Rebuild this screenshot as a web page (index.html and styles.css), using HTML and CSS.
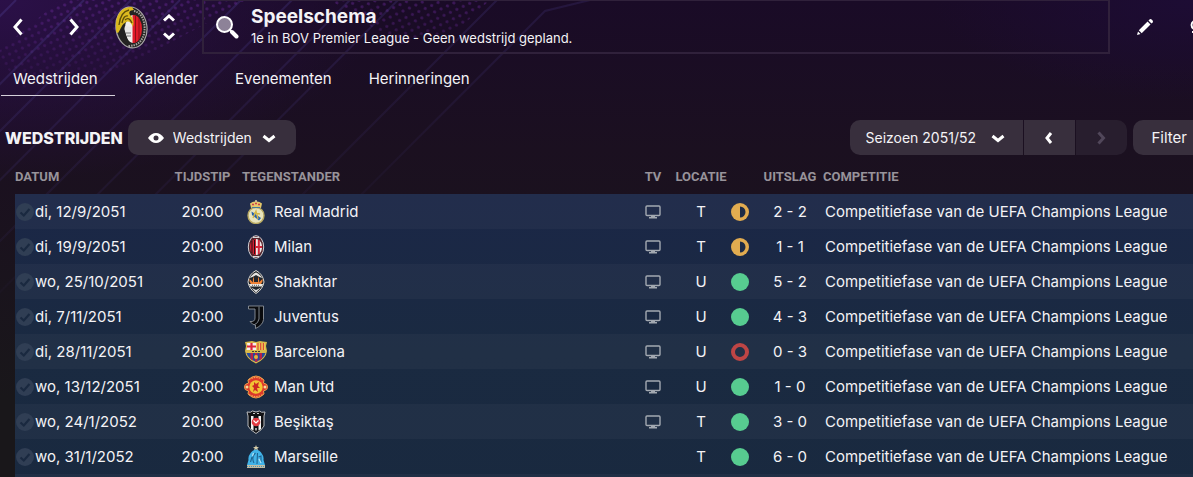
FILE: index.html
```html
<!DOCTYPE html>
<html lang="nl">
<head>
    <meta charset="UTF-8">
    <meta name="viewport" content="width=device-width, initial-scale=1.0">
    <title>Speelschema</title>
    <link rel="stylesheet" href="styles.css">
</head>
<body>

    <!-- Achtergrondpatroon -->
    <svg class="backdrop" width="620" height="330" aria-hidden="true">
        <defs>
            <pattern id="dots" width="10" height="10" patternUnits="userSpaceOnUse" patternTransform="rotate(20)">
                <circle cx="2.500" cy="2.500" r="1.600" fill="#6a2a9a"/>
                <circle cx="7.500" cy="7.500" r="1.600" fill="#6a2a9a"/>
            </pattern>
            <linearGradient id="dotFade" x1="0" y1="0" x2="0.1" y2="1">
                <stop offset="0" stop-color="#fff" stop-opacity=".5"/>
                <stop offset="1" stop-color="#fff" stop-opacity="0"/>
            </linearGradient>
            <linearGradient id="lineFade" gradientUnits="userSpaceOnUse" x1="100" y1="0" x2="160" y2="300">
                <stop offset="0" stop-color="#4a3a8c" stop-opacity=".38"/>
                <stop offset=".35" stop-color="#3d2f70" stop-opacity=".3"/>
                <stop offset="1" stop-color="#3d3070" stop-opacity="0"/>
            </linearGradient>
            <mask id="dotMask"><rect width="620" height="110" fill="url(#dotFade)"/></mask>
        </defs>
        <g mask="url(#dotMask)">
            <path d="M60 0H150L25 90L0 60V50Z M150 0H250L110 75L30 80Z M330 0H490L460 28L400 45Z" fill="url(#dots)"/>
        </g>
        <g fill="none" stroke="url(#lineFade)" stroke-width="2">
            <path d="M16 0L-1 17"/>
            <path d="M84 0L-1 85"/>
            <path d="M131 0L-1 132"/>
            <path d="M180 0L-1 181"/>
            <path d="M241 0L-1 242"/>
            <path d="M292 0L-1 293"/>
            <path d="M350 0L20 330"/>
            <path d="M398 0L68 330"/>
            <path d="M497 0L167 330"/>
            <path d="M590 0L545 11L226 330"/>
        </g>
    </svg>

    <!-- Header -->
    <header class="topbar">
        <div class="history">
            <button class="icon-btn" aria-label="Vorige"><svg width="12" height="18" viewBox="0 0 12 18"><path d="M9.500 1.500L3 9L9.500 16.500" class="arrow"/></svg></button>
            <button class="icon-btn" aria-label="Volgende"><svg width="12" height="18" viewBox="0 0 12 18"><path d="M2.500 1.500L9 9L2.500 16.500" class="arrow"/></svg></button>
        </div>
        <svg class="club" width="34" height="44" viewBox="0 0 34 44" aria-hidden="true">
            <defs><clipPath id="shield"><ellipse cx="19.500" cy="24" rx="8.500" ry="14"/></clipPath></defs>
            <ellipse cx="17.500" cy="22.500" rx="15.500" ry="20.500" fill="#242322" stroke="#a9a7a5" stroke-width="1.200" transform="rotate(-8 17 23)"/>
            <path d="M20 6C29 8 32 19 30 29C28 36 24 41 14 41" fill="none" stroke="#a5a29f" stroke-width="2" stroke-dasharray="1.500 1"/>
            <g clip-path="url(#shield)">
                <path d="M8 8H19V40H8Z" fill="#f1efed"/>
                <path d="M18.500 8H30V40H18.500Z" fill="#e01a28"/>
                <path d="M21.500 8V40M25 8V40" stroke="#8d1017" stroke-width="1"/>
            </g>
            <path d="M2 22C1 10 8 1 18 2L20 5C15 5 14 8 17 11C20 14 20 18 19 22C17 17 14 15 11 18C8 19 7 24 4 28C2 28 2 25 2 22Z" fill="#dbb91f"/>
            <path d="M5 20C6 11 10 6 15 5M8 18C9 13 11 10 14 11M11 15C14 12 16 14 18 18" fill="none" stroke="#5d4c0a" stroke-width="1.300"/>
            <path d="M11 21L18 22L17 31L13 31L10 25Z" fill="#e9e8e6"/>
            <path d="M12 28h5M13 31h4" stroke="#777" stroke-width="1"/>
            <path d="M5 28L10 23L13 33L15 38L9 36Z" fill="#242322"/>
        </svg>
        <div class="stepper">
            <button class="icon-btn" aria-label="Omhoog"><svg width="14" height="8" viewBox="0 0 14 8"><path d="M2 6.500L7 2L12 6.500" class="arrow"/></svg></button>
            <button class="icon-btn" aria-label="Omlaag"><svg width="14" height="8" viewBox="0 0 14 8"><path d="M2 1.500L7 6L12 1.500" class="arrow"/></svg></button>
        </div>
        <div class="title-box">
            <button class="icon-btn" aria-label="Zoeken">
                <svg width="24" height="24" viewBox="0 0 24 24"><circle cx="9.500" cy="9.500" r="7.500" fill="#8d8298" stroke="#fff" stroke-width="2"/><path d="M15 15L17 17" stroke="#fff" stroke-width="2"/><path d="M17 17L21.500 21.500" stroke="#fff" stroke-width="4" stroke-linecap="round"/></svg>
            </button>
            <div>
                <h1>Speelschema</h1>
                <p>1e in BOV Premier League - Geen wedstrijd gepland.</p>
            </div>
        </div>
        <div class="tools">
            <button class="icon-btn" aria-label="Bewerken">
                <svg width="18" height="18" viewBox="0 0 18 18" fill="#fff"><path d="M1 17L2 13.500L4.500 16Z"/><path d="M2.800 12.300L11.600 3.500L14.500 6.400L5.700 15.200Z"/><path d="M12.500 2.600L13.800 1.300Q14.700 .6 15.600 1.400L16.600 2.400Q17.400 3.300 16.700 4.200L15.400 5.500Z"/></svg>
            </button>
            <button class="icon-btn" aria-label="Help">
                <svg width="3" height="16" viewBox="0 0 3 16"><path d="M4 2A4.500 4.500 0 0 0 4 10M2 13H4" fill="none" stroke="#fff" stroke-width="2"/></svg>
            </button>
        </div>
    </header>

    <!-- Navigatie -->
    <nav class="tabs">
        <a href="#wedstrijden" class="active">Wedstrijden</a>
        <a href="#kalender">Kalender</a>
        <a href="#evenementen">Evenementen</a>
        <a href="#herinneringen">Herinneringen</a>
    </nav>

    <!-- Filters -->
    <div class="toolbar">
        <h2>Wedstrijden</h2>
        <label class="dropdown view">
            <svg width="16" height="12" viewBox="0 0 16 12"><path d="M0 6Q3.500 1 8 1Q12.500 1 16 6Q12.500 11 8 11Q3.500 11 0 6Z" fill="#fff"/><circle cx="8" cy="6" r="2.500" fill="#382f3d"/></svg>
            <select aria-label="Weergave"><option>Wedstrijden</option></select>
            <svg width="14" height="10" viewBox="0 0 14 10"><path d="M1.500 3L7 7.500L12.500 3" class="arrow"/></svg>
        </label>
        <div class="season">
            <label class="dropdown">
                <select aria-label="Seizoen"><option>Seizoen 2051/52</option></select>
                <svg width="14" height="10" viewBox="0 0 14 10"><path d="M1.500 3L7 7.500L12.500 3" class="arrow"/></svg>
            </label>
            <button class="step" aria-label="Vorig seizoen"><svg width="10" height="14" viewBox="0 0 10 14"><path d="M7 2L3 7L7 12" class="arrow"/></svg></button>
            <button class="step last" aria-label="Volgend seizoen" disabled><svg width="10" height="14" viewBox="0 0 10 14"><path d="M2.500 1.500L7.500 7L2.500 12.500" class="arrow"/></svg></button>
        </div>
        <button class="filter">Filter</button>
    </div>

    <!-- Iconen voor de tabel -->
    <svg class="sprite" aria-hidden="true">
        <symbol id="check" viewBox="0 0 18 18"><circle cx="9" cy="9" r="9" fill="#303e54"/><path d="M4.500 9.500L7.800 12.500L13.500 6" fill="none" stroke="#1a2940" stroke-width="2.200"/></symbol>
        <symbol id="tv" viewBox="0 0 16 14"><rect x="1" y="1" width="14" height="9.500" rx="1" fill="none" stroke="#a3a9b1" stroke-width="1.400"/><path d="M6 10.500H10V12H12V13.500H4V12H6Z" fill="#a3a9b1"/></symbol>
        <symbol id="draw" viewBox="0 0 18 18"><circle cx="9" cy="9" r="9" fill="#e2ac50"/><path d="M9 3.500A5.500 5.500 0 0 1 9 14.500Z" fill="#1d2b46"/></symbol>
        <symbol id="win" viewBox="0 0 18 18"><circle cx="9" cy="9" r="9" fill="#57cc90"/></symbol>
        <symbol id="loss" viewBox="0 0 18 18"><circle cx="9" cy="9" r="7" fill="none" stroke="#bd4545" stroke-width="4"/></symbol>

        <symbol id="madrid" viewBox="0 0 24 24">
            <circle cx="12" cy="15.500" r="8" fill="#e8e4bd" stroke="#b9aa62" stroke-width="1.400"/>
            <path d="M7 8L6 3.500Q9 1 12 1.500Q15 1 18 3.500L17 8Q12 6.500 7 8Z" fill="#e5c86a"/>
            <path d="M8 4.500H10M11 3.500H13M14 4.500H16" stroke="#cf3d4a" stroke-width="1.600"/>
            <path d="M8 7.500H16" stroke="#447d9d" stroke-width="1"/>
            <path d="M12 0V2" stroke="#e7ddb0" stroke-width="1.400"/>
            <path d="M7.500 11.500L17 18L15 20.500L8 15Z" fill="#2360ae"/>
            <path d="M9 18L12 11L14 19M10 13L16 14" fill="none" stroke="#d5b746" stroke-width="1.300"/>
        </symbol>
        <symbol id="milan" viewBox="0 0 24 24">
            <ellipse cx="12" cy="12" rx="7.700" ry="11.300" fill="#55252c" stroke="#cfcfd3" stroke-width="1"/>
            <path d="M12 4C8 4.500 6 8 6 12S8 19.500 12 20Z" fill="#d41f33"/>
            <path d="M8 6V18M10.500 5V19" stroke="#211014" stroke-width="1"/>
            <path d="M12 4C16 4.500 18 8 18 12S16 19.500 12 20Z" fill="#f1e6e6"/>
            <path d="M14.800 5V19M12 12H18" stroke="#d32539" stroke-width="2"/>
            <path d="M9 2.500H15M9 21.500H15" stroke="#d8d8d8" stroke-width="1"/>
        </symbol>
        <symbol id="shakhtar" viewBox="0 0 24 24">
            <path d="M12 .5Q19 4 20 12Q19 19 12 23.500Q5 19 4 12Q5 4 12 .5Z" fill="#22262b" stroke="#d7d5cf" stroke-width="1"/>
            <path d="M12 2.500Q16.500 4.500 18 8L14.500 6.500L12 5L9.500 6.500L6 8Q7.500 4.500 12 2.500Z" fill="#e8e6e2"/>
            <path d="M5.500 9Q8 11 9 12.500Q8.500 9 10 6.500L10 12H14V6.500Q15.500 9 15 12.500Q16 11 18.500 9Q19 12 17 14H7Q5 12 5.500 9Z" fill="#f18337"/>
            <path d="M5 14H19L18 16.500H6Z" fill="#eae7e0"/>
            <path d="M8 15.300H16" stroke="#55565a" stroke-width="1" stroke-dasharray="1 1"/>
            <path d="M7 17.500L12 20L17 17.500L12 22.500Z" fill="#ddd"/>
        </symbol>
        <symbol id="juventus" viewBox="0 0 24 24">
            <path d="M4.500 1H19.500V14.500Q19 20 11.500 23.500V20Q8.500 20 6 16.500Q11 17 11 13V4H4.500Z" fill="#090a0d" stroke="#8c929a" stroke-width=".9"/>
            <path d="M15 1.500V14Q14.500 18 10 20" fill="none" stroke="#7f858e" stroke-width="1"/>
        </symbol>
        <symbol id="barcelona" viewBox="0 0 24 24">
            <path d="M1 2L5 1.500L8 1L12 2L16 1L19 1.500L23 2L22 6L23 11Q22 19 12 23.500Q2 19 1 11L2 6Z" fill="#d8b94a"/>
            <path d="M3 3H12V10H2.500L3.500 6Z" fill="#f4eeee"/><path d="M7.500 3V10M3 6.500H12" stroke="#db263a" stroke-width="2.200"/>
            <path d="M12 3H21L20.500 6L21.500 10H12Z" fill="#f1cb54"/><path d="M14 3V10M16.700 3V10M19.400 3V10" stroke="#d94a39" stroke-width="1.200"/>
            <path d="M2.500 13H21.500Q20 18.500 12 22Q4 18.500 2.500 13Z" fill="#26489c"/>
            <path d="M6.500 13H9V20.500L6.500 19ZM11 13H13.500V21.500L12 22L11 21.500ZM15.500 13H18V18.500L15.500 20.500Z" fill="#b52349"/>
            <path d="M8 11.500H16" stroke="#423d38" stroke-width="1.200" stroke-dasharray="2 1"/>
            <circle cx="12" cy="17" r="2" fill="#e2b43c"/>
        </symbol>
        <symbol id="manutd" viewBox="0 0 24 24">
            <path d="M4 5Q12 -3 20 5L19.500 8Q24 9 23.500 12Q24 15 19.500 16L20 19Q12 27 4 19L4.500 16Q0 15 .5 12Q0 9 4.500 8Z" fill="#dc382b" stroke="#e9a04b" stroke-width="1"/>
            <path d="M5 4.500Q12 .5 19 4.500M5 19.500Q12 23.500 19 19.500" fill="none" stroke="#f1a652" stroke-width="1.200" stroke-dasharray="1.500 1"/>
            <circle cx="3" cy="12" r="1.500" fill="#f3dc9a"/><circle cx="21" cy="12" r="1.500" fill="#f3dc9a"/>
            <circle cx="12" cy="12" r="6.700" fill="#f1c534"/>
            <path d="M10 7L12 9L15 7L14 11L16 13L13 13L14 17L11 15L9 17L10 13L8 11L10 10Z" fill="#cd2a22"/>
        </symbol>
        <symbol id="besiktas" viewBox="0 0 24 24">
            <path d="M3 2Q7 3 8.500 1Q12 3 15.500 1Q17 3 21 2L20 6V16Q18 20 12 23.500Q6 20 4 16V6Z" fill="#101114" stroke="#b9bbbe" stroke-width="1"/>
            <path d="M7 6H9.500V20.500L7 19ZM14.500 6H17V19L14.500 20.500Z" fill="#f3f3f3"/>
            <path d="M9 3.500H11M13 3.500H15" stroke="#c8c8c8" stroke-width="1.200"/>
            <circle cx="12" cy="12" r="4.300" fill="#e33b42"/>
            <path d="M9.500 10.500L12 13L14.500 10.500M12 18V20.500" fill="none" stroke="#fff" stroke-width="1.200"/>
        </symbol>
        <symbol id="marseille" viewBox="0 0 24 24">
            <path d="M12 0L12.800 2L15 2.200L13.300 3.500L14 5.500L12 4.300L10 5.500L10.700 3.500L9 2.200L11.200 2Z" fill="#d8cda9"/>
            <path d="M12 4.500Q16 5 18 9Q20 11 19.500 15L21 20H3L4.500 15Q4 11 6 9Q8 5 12 4.500Z" fill="#41b3e8"/>
            <path d="M11.500 8Q7 12 10 18M13.500 8L13 19M14.500 12L17 11V17M6.500 17L8 12" fill="none" stroke="#1f6390" stroke-width="1.100"/>
            <path d="M9.500 8L8.500 11M15 14L17 18" stroke="#b3e2f6" stroke-width="1.200"/>
            <path d="M3 20H21V23H3Z" fill="#c5bda2"/><path d="M3 21.500H21" stroke="#4995b5" stroke-width="1" stroke-dasharray="1 1"/>
        </symbol>
    </svg>

    <!-- Wedstrijdtabel -->
    <table class="fixtures">
        <colgroup>
            <col class="c-date"><col class="c-time"><col><col class="c-tv"><col class="c-loc"><col class="c-form"><col class="c-score"><col class="c-comp">
        </colgroup>
        <thead>
            <tr>
                <th class="left">Datum</th>
                <th>Tijdstip</th>
                <th class="left team">Tegenstander</th>
                <th>TV</th>
                <th>Locatie</th>
                <th></th>
                <th>Uitslag</th>
                <th class="left comp">Competitie</th>
            </tr>
        </thead>
        <tbody>
            <tr>
                <td class="date"><svg><use href="#check"/></svg>di, 12/9/2051</td>
                <td>20:00</td>
                <td class="team"><svg><use href="#madrid"/></svg>Real Madrid</td>
                <td class="tv"><svg><use href="#tv"/></svg></td>
                <td>T</td>
                <td class="form"><svg><use href="#draw"/></svg></td>
                <td>2 - 2</td>
                <td class="comp">Competitiefase van de UEFA Champions League</td>
            </tr>
            <tr>
                <td class="date"><svg><use href="#check"/></svg>di, 19/9/2051</td>
                <td>20:00</td>
                <td class="team"><svg><use href="#milan"/></svg>Milan</td>
                <td class="tv"><svg><use href="#tv"/></svg></td>
                <td>T</td>
                <td class="form"><svg><use href="#draw"/></svg></td>
                <td>1 - 1</td>
                <td class="comp">Competitiefase van de UEFA Champions League</td>
            </tr>
            <tr>
                <td class="date"><svg><use href="#check"/></svg>wo, 25/10/2051</td>
                <td>20:00</td>
                <td class="team"><svg><use href="#shakhtar"/></svg>Shakhtar</td>
                <td class="tv"><svg><use href="#tv"/></svg></td>
                <td>U</td>
                <td class="form"><svg><use href="#win"/></svg></td>
                <td>5 - 2</td>
                <td class="comp">Competitiefase van de UEFA Champions League</td>
            </tr>
            <tr>
                <td class="date"><svg><use href="#check"/></svg>di, 7/11/2051</td>
                <td>20:00</td>
                <td class="team"><svg><use href="#juventus"/></svg>Juventus</td>
                <td class="tv"><svg><use href="#tv"/></svg></td>
                <td>U</td>
                <td class="form"><svg><use href="#win"/></svg></td>
                <td>4 - 3</td>
                <td class="comp">Competitiefase van de UEFA Champions League</td>
            </tr>
            <tr>
                <td class="date"><svg><use href="#check"/></svg>di, 28/11/2051</td>
                <td>20:00</td>
                <td class="team"><svg><use href="#barcelona"/></svg>Barcelona</td>
                <td class="tv"><svg><use href="#tv"/></svg></td>
                <td>U</td>
                <td class="form"><svg><use href="#loss"/></svg></td>
                <td>0 - 3</td>
                <td class="comp">Competitiefase van de UEFA Champions League</td>
            </tr>
            <tr>
                <td class="date"><svg><use href="#check"/></svg>wo, 13/12/2051</td>
                <td>20:00</td>
                <td class="team"><svg><use href="#manutd"/></svg>Man Utd</td>
                <td class="tv"><svg><use href="#tv"/></svg></td>
                <td>U</td>
                <td class="form"><svg><use href="#win"/></svg></td>
                <td>1 - 0</td>
                <td class="comp">Competitiefase van de UEFA Champions League</td>
            </tr>
            <tr>
                <td class="date"><svg><use href="#check"/></svg>wo, 24/1/2052</td>
                <td>20:00</td>
                <td class="team"><svg><use href="#besiktas"/></svg>Beşiktaş</td>
                <td class="tv"><svg><use href="#tv"/></svg></td>
                <td>T</td>
                <td class="form"><svg><use href="#win"/></svg></td>
                <td>3 - 0</td>
                <td class="comp">Competitiefase van de UEFA Champions League</td>
            </tr>
            <tr>
                <td class="date"><svg><use href="#check"/></svg>wo, 31/1/2052</td>
                <td>20:00</td>
                <td class="team"><svg><use href="#marseille"/></svg>Marseille</td>
                <td></td>
                <td>T</td>
                <td class="form"><svg><use href="#win"/></svg></td>
                <td>6 - 0</td>
                <td class="comp">Competitiefase van de UEFA Champions League</td>
            </tr>
            <tr>
                <td colspan="8"></td>
            </tr>
        </tbody>
    </table>

</body>
</html>
```
FILE: styles.css
```css
* {
    box-sizing: border-box;
}
html {
    overflow: hidden;
}
body {
    margin: 0;
    min-height: 100vh;
    font-family: 'Inter', 'Liberation Sans', sans-serif;
    font-size: 15px;
    line-height: 20px;
    color: #f4f3f6;
    background: radial-gradient(ellipse 380px 180px at 0 0, #2b1048, transparent),
        radial-gradient(ellipse 260px 100px at 100% 0, #1d0c34, transparent),
        linear-gradient(#1a0b27, #1b1020 150px, #19171a 400px);
}
h1, h2, p {
    margin: 0;
}
button, select {
    font: inherit;
    color: inherit;
    border: none;
    background: none;
    padding: 0;
}
svg {
    display: block;
    flex: none;
}
.arrow {
    fill: none;
    stroke: #fff;
    stroke-width: 3;
}
.backdrop {
    position: absolute;
    top: 0;
    left: 0;
    z-index: -1;
}
.sprite {
    display: none;
}
.topbar {
    display: flex;
    align-items: center;
    height: 54px;
    padding-left: 12px;
}
.history {
    display: flex;
    gap: 44px;
}
.club {
    margin-left: 34px;
}
.stepper {
    display: flex;
    flex-direction: column;
    gap: 10px;
    margin-left: 14px;
}
.title-box {
    display: flex;
    flex: 1;
    align-items: center;
    gap: 12px;
    height: 54px;
    margin-left: 26px;
    padding-left: 11px;
    border: 2px solid #30213b;
    border-top-width: 1px;
}
.title-box h1 {
    font-size: 19px;
    line-height: 22px;
}
.title-box p {
    font-size: 13px;
}
.tools {
    display: flex;
    align-items: center;
    gap: 36px;
    padding-left: 26px;
}
.tabs {
    display: flex;
    gap: 8px;
    padding-left: 1px;
}
.tabs a {
    padding: 15px 17px 6px 12px;
    color: inherit;
    text-decoration: none;
    border-bottom: 1px solid transparent;
}
.tabs a.active {
    border-color: #d5d0da;
}
.toolbar {
    display: flex;
    align-items: center;
    height: 35px;
    margin-top: 24px;
    padding-left: 5px;
}
.toolbar h2 {
    font-size: 16px;
    font-weight: 800;
    text-transform: uppercase;
}
.dropdown {
    display: flex;
    align-items: center;
    gap: 14px;
    height: 35px;
    background: #382f3d;
    border-radius: 10px;
}
.dropdown select {
    appearance: none;
    font-size: 14px;
}
.view {
    gap: 9px;
    margin-left: 5px;
    padding: 0 20px;
}
.season {
    display: flex;
    gap: 1px;
    margin-left: auto;
}
.season .dropdown {
    padding: 0 18px 0 16px;
    border-radius: 10px 0 0 10px;
}
.step {
    display: flex;
    align-items: center;
    justify-content: center;
    width: 51px;
    background: #382f3d;
}
.step.last {
    background: #281e2e;
    border-radius: 0 10px 10px 0;
}
.step.last .arrow {
    stroke: #51475a;
}
.filter {
    height: 35px;
    margin-left: 6px;
    padding: 0 6px 0 19px;
    background: #382f3d;
    border-radius: 10px 0 0 10px;
}
.fixtures {
    table-layout: fixed;
    width: calc(100% - 15px);
    margin-left: 15px;
    border-collapse: collapse;
}
.c-date { width: 159px; }
.c-time { width: 57px; }
.c-tv { width: 42px; }
.c-loc { width: 54px; }
.c-form { width: 30px; }
.c-score { width: 64px; }
.c-comp { width: 371px; }
th {
    height: 39px;
    padding: 4px 0 0;
    font-family: 'Roboto', sans-serif;
    font-size: 13px;
    color: #98939a;
    text-transform: uppercase;
    white-space: nowrap;
}
th.left {
    text-align: left;
}
th.team {
    padding-left: 11px;
}
th.comp {
    padding-left: 1px;
}
tbody {
    background: linear-gradient(#1b2747, #1a2a41 50%, #19293f);
}
tbody tr:nth-child(odd) {
    background: rgba(255, 255, 255, 0.03);
}
td {
    height: 35px;
    padding: 0;
    text-align: center;
    white-space: nowrap;
}
td svg {
    display: inline-block;
    vertical-align: -4px;
}
td.date, td.team, td.comp {
    text-align: left;
}
.date svg {
    width: 18px;
    height: 18px;
    margin: 0 1px;
}
td.team {
    padding-left: 13px;
}
.team svg {
    width: 24px;
    height: 24px;
    margin-right: 6px;
    vertical-align: -7px;
}
.tv svg {
    width: 16px;
    height: 14px;
    vertical-align: -2px;
}
td.form {
    padding-right: 6px;
}
.form svg {
    width: 18px;
    height: 18px;
}
td.comp {
    padding-left: 3px;
}
```
